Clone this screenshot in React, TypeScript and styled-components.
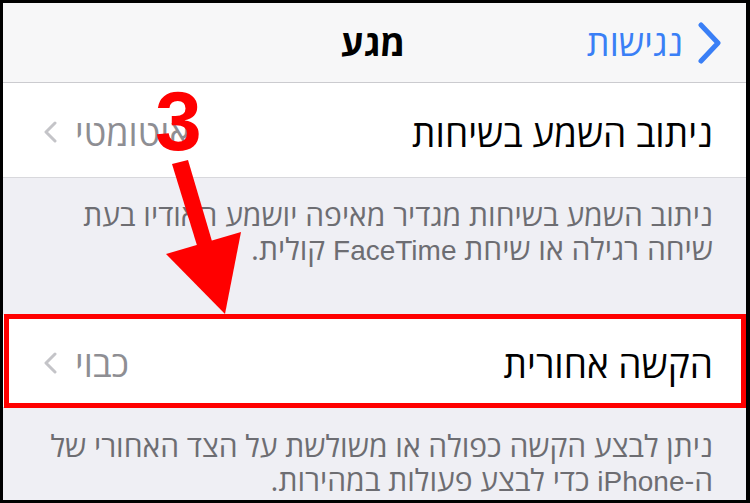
import React from "react";
import styled, { createGlobalStyle } from "styled-components";

const GlobalStyle = createGlobalStyle`
  html, body { margin: 0; padding: 0; background: #000; }
  body { font-family: "Open Sans", "Noto Sans Hebrew", "Liberation Sans", sans-serif; }
  * { box-sizing: border-box; }
`;

const Frame = styled.div`
  position: relative;
  width: 750px;
  height: 503px;
  border-style: solid;
  border-color: #000;
  border-width: 3px 4px 3px 3px;
  background: #efeff4;
  overflow: hidden;
  direction: rtl;
  display: flex;
  flex-direction: column;
`;

const NavBar = styled.header`
  height: 80px;
  flex: none;
  display: grid;
  grid-template-columns: 1fr auto 1fr;
  align-items: center;
  padding: 0 23px 0 20px;
  background: #f7f7f8;
  border-bottom: 1px solid #cbcbcf;
`;

const BackButton = styled.div`
  display: flex;
  align-items: center;
  gap: 14px;
  color: #3a7ff6;
  font-size: 36px;
  justify-self: start;
`;

const Title = styled.div`
  font-size: 36px;
  font-weight: bold;
  color: #000;
`;

const Row = styled.div<{ $h: number }>`
  position: relative;
  flex: none;
  height: ${(p) => p.$h}px;
  display: flex;
  align-items: center;
  justify-content: space-between;
  padding: 4px 33px 0 40px;
  background: #fff;
  border-bottom: 1px solid #d8d8dc;
`;

const Label = styled.span`
  font-size: 37px;
  color: #000;
`;

const Value = styled.span`
  display: flex;
  align-items: center;
  gap: 18px;
  font-size: 36px;
  color: #8e8e93;
`;

const Footer = styled.div<{ $h: number; $top: number }>`
  flex: none;
  height: ${(p) => p.$h}px;
  padding: ${(p) => p.$top}px 33px 0 20px;
  font-size: 30px;
  line-height: 34px;
  color: #6d6d72;
  white-space: nowrap;
`;

const Latin = styled.span`
  font-family: "Liberation Sans", Arial, sans-serif;
  font-size: 28px;
`;

const Highlight = styled.div`
  position: absolute;
  top: -1px;
  bottom: -1px;
  left: 1px;
  right: 0;
  border: 5px solid #f00;
  pointer-events: none;
`;

const StepNumber = styled.span`
  position: absolute;
  left: 152px;
  top: 76px;
  font-family: "Liberation Sans", Arial, sans-serif;
  font-weight: bold;
  font-size: 84px;
  line-height: 1;
  color: #f00;
  direction: ltr;
`;

const ArrowLayer = styled.svg`
  position: absolute;
  left: -3px;
  top: -3px;
  pointer-events: none;
`;

const BackChevron = () => (
  <svg width="26" height="42" viewBox="0 0 26 42">
    <path d="M4 3 L21 21 L4 39" fill="none" stroke="#3a7ff6" strokeWidth="5" strokeLinecap="round" strokeLinejoin="round" />
  </svg>
);

const RowChevron = () => (
  <svg width="14" height="22" viewBox="0 0 14 22">
    <path d="M12 2 L3 11 L12 20" fill="none" stroke="#c4c4c8" strokeWidth="3" strokeLinecap="round" strokeLinejoin="round" />
  </svg>
);

export default function App() {
  return (
    <>
      <GlobalStyle />
      <Frame>
        <NavBar>
          <BackButton>
            <BackChevron />
            <span>נגישות</span>
          </BackButton>
          <Title>מגע</Title>
          <span />
        </NavBar>
        <Row $h={95}>
          <Label>ניתוב השמע בשיחות</Label>
          <Value>
            <span>אוטומטי</span>
            <RowChevron />
          </Value>
        </Row>
        <Footer $h={137} $top={20}>
          ניתוב השמע בשיחות מגדיר מאיפה יושמע האודיו בעת
          <br />
          שיחה רגילה או שיחת <Latin>FaceTime</Latin> קולית.
        </Footer>
        <Row $h={93}>
          <Label>הקשה אחורית</Label>
          <Value>
            <span>כבוי</span>
            <RowChevron />
          </Value>
          <Highlight />
        </Row>
        <Footer $h={95} $top={21}>
          ניתן לבצע הקשה כפולה או משולשת על הצד האחורי של
          <br />
          ה-<Latin>iPhone</Latin> כדי לבצע פעולות במהירות.
        </Footer>
        <StepNumber>3</StepNumber>
        <ArrowLayer width="750" height="503" viewBox="0 0 750 503">
          <polygon points="172,164 188,160 214,248 199,252" fill="#f00" />
          <polygon points="166,254 241,232 225,314" fill="#f00" />
        </ArrowLayer>
      </Frame>
    </>
  );
}
